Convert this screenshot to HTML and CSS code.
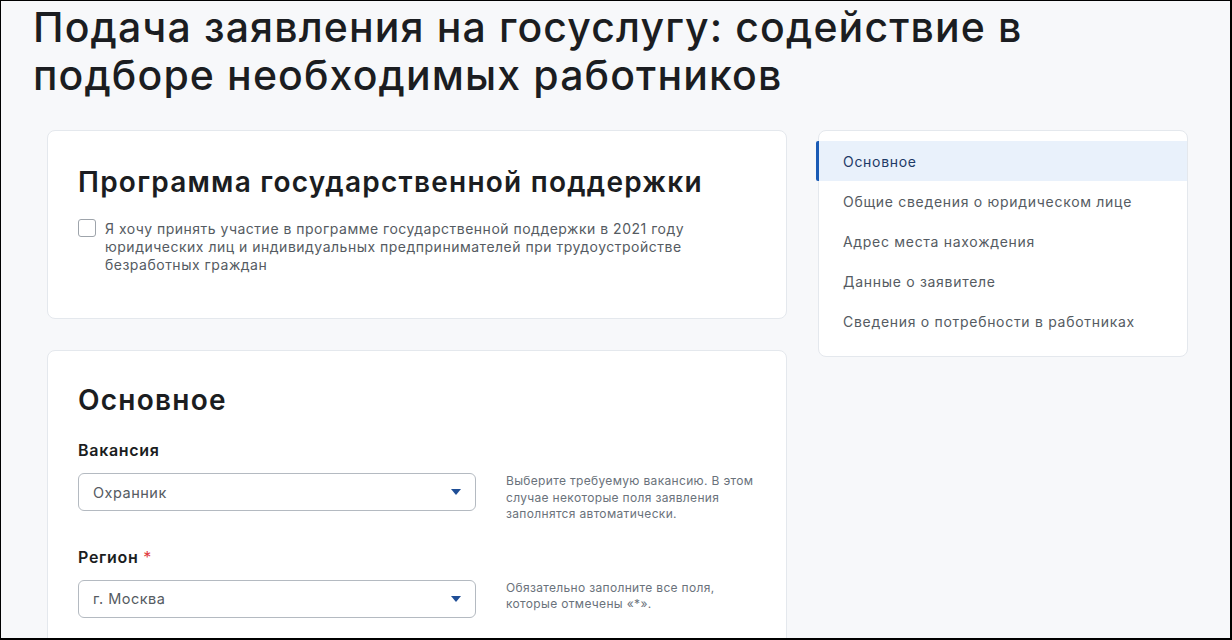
FILE: index.html
```html
<!DOCTYPE html>
<html lang="ru">
<head>
<meta charset="utf-8">
<title>Подача заявления на госуслугу</title>
<link rel="stylesheet" href="styles.css">
</head>
<body>
<div class="frame">
  <h1 class="page-title">Подача заявления на госуслугу: содействие в<br>подборе необходимых работников</h1>
  <div class="layout">
    <main class="main-col">
      <section class="card card-program">
        <h2 class="card-title">Программа государственной поддержки</h2>
        <label class="check">
          <span class="check-box"></span>
          <span class="check-text">Я хочу принять участие в программе государственной поддержки в 2021 году юридических лиц и индивидуальных предпринимателей при трудоустройстве безработных граждан</span>
        </label>
      </section>
      <section class="card card-main">
        <h2 class="card-title">Основное</h2>
        <div class="field field-first">
          <div class="field-label">Вакансия</div>
          <div class="field-row">
            <div class="select">
              <span class="select-value">Охранник</span>
              <svg class="select-arrow" width="10" height="6" viewBox="0 0 10 6"><path d="M0 0h10L5 6z" fill="#1f4e96"/></svg>
            </div>
            <p class="field-hint">Выберите требуемую вакансию. В этом случае некоторые поля заявления заполнятся автоматически.</p>
          </div>
        </div>
        <div class="field">
          <div class="field-label">Регион <span class="req">*</span></div>
          <div class="field-row">
            <div class="select">
              <span class="select-value">г. Москва</span>
              <svg class="select-arrow" width="10" height="6" viewBox="0 0 10 6"><path d="M0 0h10L5 6z" fill="#1f4e96"/></svg>
            </div>
            <p class="field-hint">Обязательно заполните все поля, которые отмечены «*».</p>
          </div>
        </div>
      </section>
    </main>
    <aside class="side">
      <nav class="nav-card">
        <a class="nav-item active">Основное</a>
        <a class="nav-item">Общие сведения о юридическом лице</a>
        <a class="nav-item">Адрес места нахождения</a>
        <a class="nav-item">Данные о заявителе</a>
        <a class="nav-item">Сведения о потребности в работниках</a>
      </nav>
    </aside>
  </div>
</div>
</body>
</html>
```

FILE: styles.css
```css
* { box-sizing: border-box; }
html, body { margin: 0; padding: 0; }
body {
  font-family: Inter, "Open Sans", "Liberation Sans", sans-serif;
  background: #ffffff;
  color: #1b1d21;
}
.frame {
  width: 1232px;
  height: 640px;
  overflow: hidden;
  background: #f7f8fa;
  border-left: 1px solid #000;
  border-top: 1px solid #000;
  border-right: 2px solid #000;
  border-bottom: 2px solid #000;
  padding: 0 32px;
}
.page-title {
  margin: 0;
  padding-top: 2px;
  font-size: 41px;
  line-height: 48px;
  font-weight: 500;
  letter-spacing: 1.12px;
  color: #1b1d21;
}
.layout {
  display: flex;
  gap: 31px;
  padding-left: 14px;
  margin-top: 31px;
  align-items: flex-start;
}
.main-col {
  width: 740px;
  display: flex;
  flex-direction: column;
  gap: 31px;
}
.card {
  background: #fff;
  border: 1px solid #e4e8ed;
  border-radius: 8px;
  padding: 34px 30px 40px;
}
.card-program { height: 189px; }
.card-title {
  margin: 0;
  font-size: 28px;
  line-height: 34px;
  font-weight: 600;
  letter-spacing: 1.25px;
  color: #1b1d21;
}
.check {
  display: flex;
  gap: 9px;
  margin-top: 21px;
}
.check-box {
  flex: none;
  width: 18px;
  height: 18px;
  margin-top: -1px;
  border: 1px solid #9ea4ab;
  border-radius: 3px;
  background: #fff;
}
.check-text {
  font-size: 14px;
  line-height: 18px;
  color: #555b62;
  letter-spacing: 0.5px;
  max-width: 600px;
}
.card-main { padding-top: 32px; }
.field { margin-top: 23px; }
.field-first { margin-top: 22px; }
.field-label {
  font-size: 16px;
  line-height: 22px;
  font-weight: 600;
  color: #1b1d21;
  letter-spacing: 0.7px;
}
.req { color: #e0393e; font-weight: 400; }
.field-row {
  display: flex;
  gap: 30px;
  margin-top: 12px;
  align-items: flex-start;
}
.select {
  flex: none;
  width: 398px;
  height: 38px;
  border: 1px solid #b4bac1;
  border-radius: 6px;
  background: #fff;
  display: flex;
  align-items: center;
  justify-content: space-between;
  padding: 0 14px 0 14px;
}
.select-value {
  font-size: 14.5px;
  color: #555b62;
  letter-spacing: 0.5px;
}
.select-arrow { display: block; }
.field-hint {
  margin: 0;
  width: 256px;
  font-size: 12px;
  line-height: 16.5px;
  color: #6a727b;
  letter-spacing: 0.33px;
}
.side { width: 370px; }
.nav-card {
  position: relative;
  background: #fff;
  border: 1px solid #e4e8ed;
  border-radius: 8px;
  padding: 10px 0 15px;
  display: flex;
  flex-direction: column;
}
.nav-item {
  display: flex;
  align-items: center;
  height: 40px;
  padding-left: 24px;
  font-size: 14px;
  color: #555b62;
  letter-spacing: 0.7px;
}
.nav-item.active {
  position: relative;
  background: #e9f1fb;
  color: #1e3a66;
}
.nav-item.active::before {
  content: "";
  position: absolute;
  left: -3px;
  top: 0;
  bottom: 0;
  width: 3px;
  background: #1a5bb5;
  border-radius: 2px 0 0 2px;
}
```
